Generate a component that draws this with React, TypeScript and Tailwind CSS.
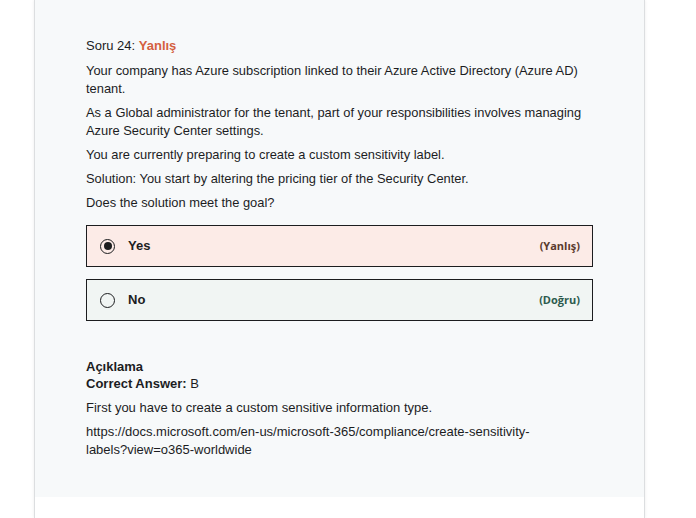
const paragraflar = [
  'Your company has Azure subscription linked to their Azure Active Directory (Azure AD) tenant.',
  'As a Global administrator for the tenant, part of your responsibilities involves managing Azure Security Center settings.',
  'You are currently preparing to create a custom sensitivity label.',
  'Solution: You start by altering the pricing tier of the Security Center.',
  'Does the solution meet the goal?',
]

function Secenek({ etiket, secili, durum }: { etiket: string; secili: boolean; durum: 'yanlis' | 'dogru' }) {
  const yanlis = durum === 'yanlis'
  return (
    <div
      className={`flex h-[42px] items-center border border-[#1c1d1f] pl-[13px] pr-[12px] ${
        yanlis ? 'bg-[#fcebe7]' : 'bg-[#f1f5f3]'
      }`}
    >
      <span className="flex h-[15px] w-[15px] items-center justify-center rounded-full border border-[#1c1d1f]">
        {secili && <span className="h-[8px] w-[8px] rounded-full bg-[#1c1d1f]" />}
      </span>
      <span className="ml-[13px] text-[13px] font-bold text-[#1c1d1f]">{etiket}</span>
      <span
        className={`ml-auto font-['Open_Sans',sans-serif] text-[11px] font-bold ${
          yanlis ? 'text-[#5a3a2e]' : 'text-[#2d5b4e]'
        }`}
      >
        {yanlis ? '(Yanlış)' : '(Doğru)'}
      </span>
    </div>
  )
}

export default function App() {
  return (
    <div className="h-[518px] overflow-hidden bg-white font-['Liberation_Sans',Arial,sans-serif] text-[#1c1d1f]">
      <div className="ml-[34px] flex h-full w-[611px] flex-col border-x border-[#dcdee0] shadow-[0_0_3px_rgba(0,0,0,0.08)]">
        <div className="h-[497px] bg-[#f7f9fa] pl-[51px] pr-[51px] pt-[37px]">
          <p className="text-[13px] leading-[18px]">
            Soru 24: <span className="font-bold text-[#d4603f]">Yanlış</span>
          </p>
          <div className="mt-[7px] text-[12.9px] leading-[18px]">
            {paragraflar.map((p) => (
              <p key={p} className="mb-[6px]">
                {p}
              </p>
            ))}
          </div>
          <div className="mt-[13px] flex flex-col gap-[12px]">
            <Secenek etiket="Yes" secili durum="yanlis" />
            <Secenek etiket="No" secili={false} durum="dogru" />
          </div>
          <div className="mt-[37px] text-[13px] leading-[17px]">
            <p className="font-bold">Açıklama</p>
            <p>
              <span className="font-bold">Correct Answer:</span> B
            </p>
          </div>
          <div className="mt-[7px] text-[13px] leading-[18px]">
            <p className="mb-[6px]">First you have to create a custom sensitive information type.</p>
            <p className="pr-[40px]">
              https://docs.microsoft.com/en-us/microsoft-365/compliance/create-sensitivity-labels?view=o365-worldwide
            </p>
          </div>
        </div>
        <div className="flex-1 bg-white" />
      </div>
    </div>
  )
}
